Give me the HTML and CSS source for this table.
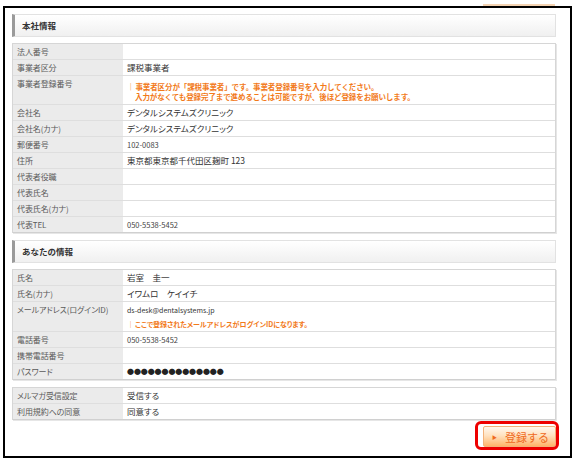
FILE: index.html
```html
<!DOCTYPE html>
<html lang="ja">
<head>
<meta charset="utf-8">
<title>登録内容確認</title>
<link rel="stylesheet" href="styles.css">
</head>
<body>
<div class="topedge"><div class="strip"></div></div>
<div class="frame">
  <div class="sec-head">本社情報</div>
  <table class="info">
    <tr><th>法人番号</th><td></td></tr>
    <tr><th>事業者区分</th><td>課税事業者</td></tr>
    <tr class="tall"><th>事業者登録番号</th><td><div class="note"><span class="bar">｜</span>事業者区分が「課税事業者」です。事業者登録番号を入力してください。<br><span class="indent">入力がなくても登録完了まで進めることは可能ですが、後ほど登録をお願いします。</span></div></td></tr>
    <tr><th>会社名</th><td>デンタルシステムズクリニック</td></tr>
    <tr><th>会社名(カナ)</th><td>デンタルシステムズクリニック</td></tr>
    <tr><th>郵便番号</th><td class="small">102-0083</td></tr>
    <tr><th>住所</th><td>東京都東京都千代田区麹町 123</td></tr>
    <tr><th>代表者役職</th><td></td></tr>
    <tr><th>代表氏名</th><td></td></tr>
    <tr><th>代表氏名(カナ)</th><td></td></tr>
    <tr><th>代表TEL</th><td class="small">050-5538-5452</td></tr>
  </table>

  <div class="sec-head sec2">あなたの情報</div>
  <table class="info">
    <tr><th>氏名</th><td>岩室　圭一</td></tr>
    <tr><th>氏名(カナ)</th><td>イワムロ　ケイイチ</td></tr>
    <tr class="mail"><th>メールアドレス(ログインID)</th><td><div class="email">ds-desk@dentalsystems.jp</div><div class="note mailnote"><span class="bar">｜</span>ここで登録されたメールアドレスがログインIDになります。</div></td></tr>
    <tr><th>電話番号</th><td class="small">050-5538-5452</td></tr>
    <tr><th>携帯電話番号</th><td></td></tr>
    <tr><th>パスワード</th><td class="dots">●●●●●●●●●●●●●●</td></tr>
  </table>

  <table class="info third">
    <tr><th>メルマガ受信設定</th><td>受信する</td></tr>
    <tr><th>利用規約への同意</th><td>同意する</td></tr>
  </table>

  <div class="actions">
    <div class="btn-wrap">
      <button class="btn" type="button"><span class="tri">▶</span>登録する</button>
      <span class="highlight"></span>
    </div>
  </div>
</div>
</body>
</html>
```
FILE: styles.css
```css
html, body {
  margin: 0;
  padding: 0;
  background: #fff;
}
body {
  width: 576px;
  height: 463px;
  overflow: hidden;
  font-family: "Noto Sans CJK JP", "Noto Sans", sans-serif;
  color: #333;
}
.topedge {
  height: 6px;
  display: flex;
  align-items: flex-end;
}
.strip {
  margin-left: 483px;
  width: 72px;
  height: 2px;
  background: #f4d3b2;
}
.frame {
  margin-left: 3px;
  width: 569px;
  height: 452px;
  box-sizing: border-box;
  border: 2px solid #000;
  padding: 6px 14px 9px 7px;
}
.sec-head {
  height: 23px;
  box-sizing: border-box;
  border: 1px solid #e2e2e2;
  border-left: 3px solid #9a9a9a;
  background: linear-gradient(#ffffff, #f0f0f0);
  font-size: 8.5px;
  font-weight: bold;
  color: #333;
  line-height: 21px;
  padding-left: 7px;
  margin-bottom: 6px;
}
.sec2 {
  margin-top: 7px;
}
.info {
  width: 544px;
  border-collapse: separate;
  border-spacing: 0;
  border: 1px solid #d6d6d6;
  border-bottom: none;
  box-shadow: 1px 1px 0 #e6e6e6;
  table-layout: fixed;
  font-feature-settings: "palt";
}
.info th, .info td {
  padding: 0 4px;
  height: 15px;
  line-height: 15px;
  border-bottom: 1px solid #dedede;
  font-size: 8px;
  font-weight: normal;
  text-align: left;
  vertical-align: top;
  white-space: nowrap;
}
.info tr:last-child th, .info tr:last-child td {
  border-bottom-color: #d0d0d0;
}
.info th {
  width: 102px;
  background: #ebebeb;
  color: #5a5a5a;
  letter-spacing: -0.1px;
}
.info td {
  background: #fff;
  color: #333;
  font-size: 8.5px;
}
.info td.small {
  font-size: 7.5px;
  color: #444;
}
.tall td {
  height: 28px;
}
.tall td .note {
  padding-top: 6px;
  line-height: 10px;
}
.note {
  font-size: 7.5px;
  font-weight: bold;
  color: #f27a1a;
  line-height: 10px;
  font-feature-settings: normal;
  letter-spacing: -0.1px;
}
.bar {
  font-weight: normal;
  margin-right: 1px;
}
.indent {
  padding-left: 8px;
}
.mail td {
  height: 29px;
}
.email {
  font-size: 7px;
  line-height: 15px;
  padding-top: 1px;
}
.mailnote {
  font-size: 7px;
  line-height: 12px;
  font-feature-settings: "palt";
  letter-spacing: 0;
}
.info td.dots {
  font-size: 7px;
  letter-spacing: -0.1px;
  color: #222;
  font-feature-settings: normal;
}
.third {
  margin-top: 7px;
}
.actions {
  display: flex;
  justify-content: flex-end;
  margin-top: 6px;
}
.btn-wrap {
  position: relative;
}
.btn {
  display: flex;
  align-items: center;
  width: 73px;
  height: 21px;
  box-sizing: border-box;
  border: 1px solid #f3b27a;
  border-radius: 2px;
  background: linear-gradient(#fff8ef 0%, #ffe2c0 45%, #ffb46a 100%);
  padding: 0 0 0 8px;
  margin: 0;
  font-family: "Noto Sans CJK JP", sans-serif;
  font-size: 11px;
  color: #ef6a1e;
  cursor: pointer;
}
.tri {
  font-size: 5px;
  margin-right: 8px;
  color: #ef6a1e;
}
.highlight {
  position: absolute;
  left: -8px;
  top: -5px;
  width: 84px;
  height: 29px;
  box-sizing: border-box;
  border: 3px solid #ee0000;
  border-radius: 6px;
  pointer-events: none;
}
```
